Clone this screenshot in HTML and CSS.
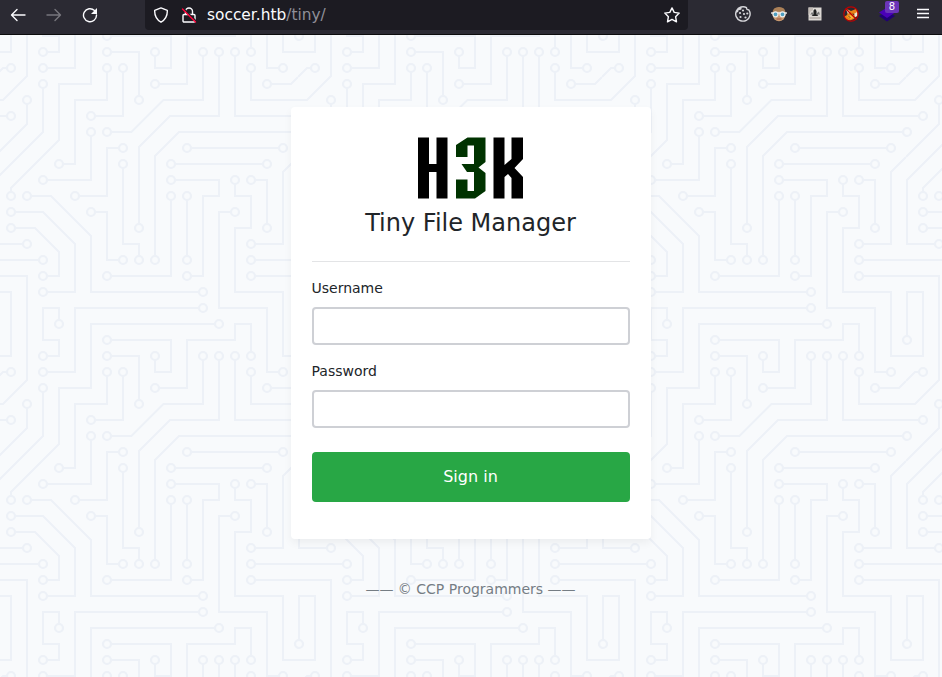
FILE: index.html
```html
<!DOCTYPE html>
<html lang="en">
<head>
<meta charset="utf-8">
<title>Tiny File Manager</title>
<link rel="stylesheet" href="styles.css">
</head>
<body>
<header class="toolbar">
  <nav class="nav">
    <svg width="16" height="16" viewBox="0 0 16 16"><path d="M15 8H2M7 2.5L1.500 8L7 13.500"/></svg>
    <svg class="dim" width="16" height="16" viewBox="0 0 16 16"><path d="M1 8H14M9 2.500L14.500 8L9 13.500"/></svg>
    <svg width="16" height="16" viewBox="0 0 16 16"><path d="M12.500 3.500A6.500 6.500 0 1 0 14.500 8"/><path class="solid" d="M15 1V7H9z"/></svg>
  </nav>
  <div class="urlbar">
    <svg width="16" height="16" viewBox="0 0 16 16"><path d="M8 .9L14.300 3.300C14.600 9 12.500 12.500 8 15.200C3.500 12.500 1.400 9 1.700 3.300z"/></svg>
    <svg class="lock" width="16" height="16" viewBox="0 0 16 16"><path d="M4.500 7V4.500a3.500 3.500 0 0 1 7 0V7M3 7.500H13a1 1 0 0 1 1 1V14a1 1 0 0 1-1 1H3a1 1 0 0 1-1-1V8.500a1 1 0 0 1 1-1z"/><path class="gap" d="M2.500 1.500L15 14"/><path class="slash" d="M1.500 2L14.500 15"/></svg>
    <span class="url">soccer.htb<span>/tiny/</span></span>
    <svg class="star" width="16" height="16" viewBox="0 0 16 16"><path d="M8 .9L10.200 5.400L15.200 6.100L11.600 9.700L12.500 14.800L8 12.400L3.500 14.800L4.400 9.700L.8 6.100L5.800 5.400z"/></svg>
  </div>
  <div class="extensions">
    <svg width="16" height="16" viewBox="0 0 16 16"><path class="cookie" d="M6 1A7.200 7.200 0 1 0 13.800 3.800C12 4 11.500 3 11.500 1.700C10 .7 8 .5 6 1L5.800 3L3 3.500L2.500 5.500L.9 6.500"/><g class="chips"><circle cx="8" cy="4.500" r="1.100"/><circle cx="5" cy="7" r="1.100"/><circle cx="9" cy="8" r="1.100"/><circle cx="12.300" cy="7.500" r="1.100"/><circle cx="5.500" cy="11" r="1.100"/><circle cx="10.500" cy="11.500" r="1.100"/></g></svg>
    <svg class="art" width="16" height="16" viewBox="0 0 16 16"><ellipse cx="8" cy="8.300" rx="6.500" ry="6.900" fill="#c99a70"/><path d="M1.500 7Q1.500 1 8 1T14.500 7Q8 3.800 1.500 7z" fill="#ab8057"/><path d="M.5 7H15.500" stroke="#e8e8e8" stroke-width="1.300"/><circle cx="4.500" cy="8.300" r="2.500" fill="#4f9fc0" stroke="#eee" stroke-width="1.200"/><circle cx="11.500" cy="8.300" r="2.500" fill="#4f9fc0" stroke="#eee" stroke-width="1.200"/><path d="M6 13H10" stroke="#b06a50"/></svg>
    <svg class="art" width="16" height="16" viewBox="0 0 16 16"><path d="M1.500 1.500H14.500V14.500H1.500z" fill="#ddd9d5"/><path d="M1.500 1.500H6V4L3.500 5.500L2 9H1.500z" fill="#c2bbb6"/><path d="M3 9L5 6L6 7V4.500L8 3.500L10 5V7L12 5.500L13 9L11.500 8L11 10H5L4.500 8z" fill="#777"/><path d="M7 3.500H9V8L11 10H5L7 8z" fill="#222"/><path d="M3 12H13" stroke="#b3aca7"/></svg>
    <svg class="art" width="16" height="16" viewBox="0 0 16 16"><path d="M4 3L8 5L13 3L15 7L13.500 10L11 13L7 14.500L3 13.500L1.500 10.500L4 9L5 6z" fill="#e88218"/><path d="M3 3.500L7 5L5 8zM11 8L14 6L14.500 10L12 11z" fill="#eee3d5"/><path d="M4 10.500L8 9L11 11.500L8 13z" fill="#ffb636"/><path d="M6 10.500L7 11.500M10 8L11 8.500" stroke="#3c2414" stroke-width="1"/><circle cx="8" cy="8" r="7.200" fill="none" stroke="#c00000" stroke-width="1.200"/><path d="M3 3L13 13" stroke="#c00000" stroke-width="1.200"/></svg>
    <span class="layers"><svg class="art" width="16" height="16" viewBox="0 0 16 16"><path d="M0 10L8 5L16 10L8 15.500z" fill="#1f0075"/><path d="M0 6.500L8 1.500L16 6.500L8 12z" fill="#4a00b8"/></svg><b>8</b></span>
    <svg class="menu" width="12" height="16" viewBox="0 0 12 16"><path d="M0 3.500H12M0 7.500H12M0 11.500H12"/></svg>
  </div>
</header>
<main class="page">
  <svg class="circuit" aria-hidden="true">
    <defs>
      <circle id="n" r="4"/>
      <pattern id="board" x="-6" y="0" width="304" height="304" patternUnits="userSpaceOnUse">
        <path d="M0 225H49M209 273H81V304M304 225H257M304 241H257M273 129H177M0 81H17M193 113H289M257 0V17M193 225V161M241 17V81H304M257 33V65H304M129 129V209H145V225M129 113H113V161H81M113 241H177V161M97 177H113V225H129M65 289V273H49V304M241 177H225V273H273V304M257 145H273V193M193 241H209V161H225V145H177M289 33H273V0M97 97V145H49M49 33H81V0M113 33V65H81V129H65M97 81H129V33M113 17H145V65M225 289H97V304M241 145V161H257V193H241V257H289V304M49 17H65V1H48M161 49H193V1H242M113 1H177V33H161V17M113 97H137.400L169.400 65H209V17M145 193V112L176 81H225V17M161 225V121L185 97H304M17 161V153L65 105V49H97V0M49 49V97L1 145V209H33M33 65V89L0 122M17 33H9L0 42M273 49H297L304 42M257 209H289V137L304 122M49 241H65V217L41 193H17M209 257H97V201L57 161H33M49 257H81V209L49 177H17M33 0V41L9 65H0M1 304V257H17V304M33 304V241H0M17 0V17H0M289 0V17H304M257 304V289H241V304"/>
        <use href="#n" x="49" y="225"/><use href="#n" x="209" y="273"/><use href="#n" x="257" y="225"/><use href="#n" x="257" y="241"/><use href="#n" x="273" y="129"/><use href="#n" x="177" y="129"/><use href="#n" x="17" y="81"/><use href="#n" x="193" y="113"/><use href="#n" x="289" y="113"/><use href="#n" x="257" y="17"/><use href="#n" x="193" y="225"/><use href="#n" x="193" y="161"/><use href="#n" x="241" y="17"/><use href="#n" x="257" y="33"/><use href="#n" x="129" y="129"/><use href="#n" x="145" y="225"/><use href="#n" x="129" y="113"/><use href="#n" x="81" y="161"/><use href="#n" x="113" y="241"/><use href="#n" x="177" y="161"/><use href="#n" x="97" y="177"/><use href="#n" x="129" y="225"/><use href="#n" x="65" y="289"/><use href="#n" x="241" y="177"/><use href="#n" x="257" y="145"/><use href="#n" x="273" y="193"/><use href="#n" x="193" y="241"/><use href="#n" x="177" y="145"/><use href="#n" x="289" y="33"/><use href="#n" x="97" y="97"/><use href="#n" x="49" y="145"/><use href="#n" x="49" y="33"/><use href="#n" x="113" y="33"/><use href="#n" x="65" y="129"/><use href="#n" x="97" y="81"/><use href="#n" x="129" y="33"/><use href="#n" x="113" y="17"/><use href="#n" x="145" y="65"/><use href="#n" x="225" y="289"/><use href="#n" x="241" y="145"/><use href="#n" x="49" y="17"/><use href="#n" x="161" y="49"/><use href="#n" x="113" y="1"/><use href="#n" x="113" y="305"/><use href="#n" x="161" y="17"/><use href="#n" x="113" y="97"/><use href="#n" x="209" y="17"/><use href="#n" x="145" y="193"/><use href="#n" x="225" y="17"/><use href="#n" x="161" y="225"/><use href="#n" x="305" y="97"/><use href="#n" x="1" y="97"/><use href="#n" x="17" y="161"/><use href="#n" x="49" y="49"/><use href="#n" x="33" y="209"/><use href="#n" x="33" y="65"/><use href="#n" x="17" y="33"/><use href="#n" x="273" y="49"/><use href="#n" x="257" y="209"/><use href="#n" x="49" y="241"/><use href="#n" x="17" y="193"/><use href="#n" x="209" y="257"/><use href="#n" x="33" y="161"/><use href="#n" x="49" y="257"/><use href="#n" x="17" y="177"/><use href="#n" x="1" y="1"/><use href="#n" x="305" y="1"/><use href="#n" x="1" y="305"/><use href="#n" x="305" y="305"/>
      </pattern>
    </defs>
    <rect width="100%" height="100%" fill="url(#board)"/>
  </svg>
  <form class="card">
    <svg class="logo" width="106" height="62" viewBox="0 0 106 62" role="img" aria-label="H3K"><path d="M0 .5H11V27H18.500V.5H29.500V61.500H18.500V35H11V61.500H0zM75.500 .5H86.500V28L93.500 22V.5H105V22L96.500 31L105 40V61.500H93.500V41L90 37L86.500 40V61.500H75.500z"/><path class="three" d="M49.500 .5H67.500V25L60.500 30.500L67.500 36V54L57 61.500H38V42.500H49.500V54H56V35H49L43.500 27H56V8.500H49.500V20H38V8z"/></svg>
    <h1>Tiny File Manager</h1>
    <hr>
    <label for="user">Username</label>
    <input id="user" type="text">
    <label for="pass">Password</label>
    <input id="pass" type="password">
    <button type="button">Sign in</button>
  </form>
  <footer>—— © CCP Programmers ——</footer>
</main>
</body>
</html>
```
FILE: styles.css
```css
* { box-sizing: border-box; }
body {
  margin: 0;
  height: 677px;
  overflow: hidden;
  display: flex;
  flex-direction: column;
  font: 14px/21px "DejaVu Sans", sans-serif;
  color: #212529;
}
svg { display: block; flex: none; }
.toolbar {
  height: 35px;
  flex: none;
  display: flex;
  align-items: flex-start;
  background: #2b2a33;
  border-bottom: 1px solid #0c0c0d;
}
.toolbar svg { fill: none; stroke: #fbfbfe; stroke-width: 1.4; stroke-linecap: round; stroke-linejoin: round; }
.toolbar .dim { stroke: #77767d; }
.toolbar .solid { fill: #fbfbfe; stroke: none; }
.toolbar .art { stroke: none; }
.nav { width: 145px; padding: 7px 0 0 10px; display: flex; gap: 20px; }
.urlbar {
  width: 543px;
  height: 30px;
  padding: 0 8px;
  display: flex;
  align-items: center;
  background: #1c1b22;
  border-radius: 0 0 4px 4px;
}
.lock { margin-left: 12px; }
.toolbar .slash { stroke: #ff0039; }
.toolbar .gap { stroke: #1c1b22; }
.url { flex: 1; margin-left: 10px; font-size: 15.4px; line-height: 30px; color: #fbfbfe; }
.url span { color: #8f8f98; }
.extensions { flex: 1; display: flex; padding: 6px 10px 0 47px; gap: 20px; }
.toolbar .cookie { stroke: #d6d6da; }
.chips circle { fill: #d6d6da; stroke: none; }
.menu { margin-left: 2px; }
.layers { position: relative; width: 16px; height: 16px; }
.layers b {
  position: absolute;
  left: 6px;
  top: -5px;
  width: 14px;
  height: 12px;
  border-radius: 2px;
  background: #6b35b8;
  color: #fff;
  font: 10px/11px "DejaVu Sans", sans-serif;
  text-align: center;
}
.page {
  position: relative;
  flex: 1;
  display: flex;
  flex-direction: column;
  align-items: center;
  padding-top: 72px;
  background: #f8fafc;
}
.circuit { position: absolute; inset: 0; width: 100%; height: 100%; }
.circuit path { fill: none; stroke: #edf1f7; stroke-width: 2; }
.circuit circle { fill: #f8fafc; stroke: #edf1f7; stroke-width: 2.2; }
.card {
  position: relative;
  width: 360px;
  height: 432px;
  padding: 30px 21px 0;
  display: flex;
  flex-direction: column;
  background: #fff;
  border-radius: 4px;
  box-shadow: 0 4px 8px rgba(0, 0, 0, .05);
}
.logo { align-self: center; }
.logo .three { fill: #003300; }
h1 { margin: 10px 1px 0 0; font-size: 24px; line-height: 29px; font-weight: 400; text-align: center; }
hr { width: 100%; height: 1px; margin: 23px 0 16px; border: 0; background: #e3e4e6; }
label { margin: 0 0 8px -.5px; }
input {
  width: 100%;
  height: 38px;
  margin: 0 0 16px;
  border: 2px solid #ced0d5;
  border-radius: 4px;
  background: #fff;
}
button {
  width: 100%;
  height: 50px;
  margin-top: 8px;
  padding: 0 1px 0 0;
  border: 0;
  border-radius: 4px;
  background: #28a745;
  color: #fff;
  font: 16px/24px "DejaVu Sans", sans-serif;
}
footer { position: relative; margin-top: 40px; padding-right: 1px; color: #757d84; }
```
